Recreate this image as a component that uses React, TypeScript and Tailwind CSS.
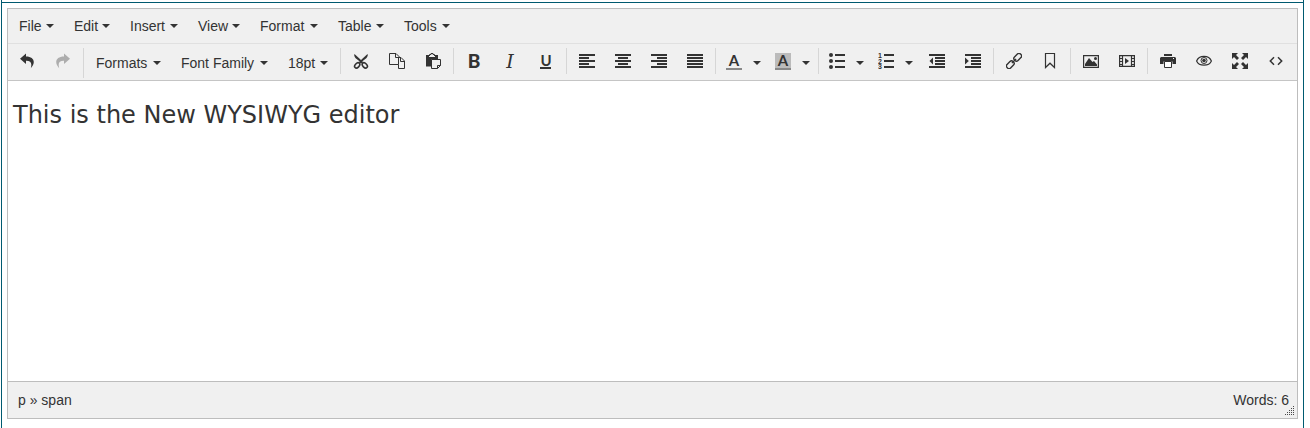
import React, { useState } from 'react';

const menus = [
  { label: 'File', width: 'w-[55px]' },
  { label: 'Edit', width: 'w-[56px]' },
  { label: 'Insert', width: 'w-[68px]' },
  { label: 'View', width: 'w-[62px]' },
  { label: 'Format', width: 'w-[78px]' },
  { label: 'Table', width: 'w-[66px]' },
  { label: 'Tools', width: 'w-[66px]' },
];

const Caret: React.FC = () => (
  <svg viewBox="0 0 8 4" className="w-2 h-1 shrink-0" fill="currentColor" aria-hidden="true">
    <path d="M0 0h8L4 4z" />
  </svg>
);

const Icon: React.FC<{ children: React.ReactNode }> = ({ children }) => (
  <svg
    viewBox="0 0 16 16"
    className="w-4 h-4 shrink-0"
    fill="none"
    stroke="currentColor"
    strokeWidth="0"
    aria-hidden="true"
  >
    {children}
  </svg>
);

// Horizontal bars of the align and indent icons, as [x, width] from top to bottom
const Bars: React.FC<{ rows: number[][]; step?: number }> = ({ rows, step = 3 }) => (
  <g fill="currentColor">
    {rows.map(([x, width], i) => (
      <rect key={i} x={x} y={1 + i * step} width={width} height="2" />
    ))}
  </g>
);

const icons = {
  undo: (
    <Icon>
      <path fill="currentColor" d="M7 3.5V.4L1 5.8l6 5.2V7.8c4.600-.1 6.300 1.700 4.800 7.400C17.200 9.500 15 3.500 7 3.500z" />
    </Icon>
  ),
  redo: (
    <Icon>
      <path fill="currentColor" d="M9 3.500V.4l6 5.400L9 11V7.800C4.400 7.700 2.700 9.500 4.200 15.200-1.200 9.500 1 3.500 9 3.500z" />
    </Icon>
  ),
  cut: (
    <Icon>
      <path fill="currentColor" d="M1.500 1C.6 3 2 5.200 6.500 8.200L6 10.200h4l-.5-2C14 5.200 15.400 3 14.500 1L8 7z" />
      <g strokeWidth="1.600">
        <ellipse cx="4.200" cy="12.400" rx="3" ry="2" transform="rotate(-45 4.200 12.400)" />
        <ellipse cx="11.800" cy="12.400" rx="3" ry="2" transform="rotate(45 11.800 12.400)" />
      </g>
    </Icon>
  ),
  copy: (
    <Icon>
      <g strokeWidth="1">
        <path d="M9.500 11.500h-9V.5h6.500l3.500 3.500v1M6.500.5v4h4" />
        <path d="M9.500 11.500v4h6V8L12 4.500H9.500v7M11.500 4.500v4h4" />
      </g>
    </Icon>
  ),
  paste: (
    <Icon>
      <path fill="currentColor" d="M1 2h3v2h6V2h3v4H6.500v7.500H1z" />
      <path strokeWidth="1" d="M4.500 3V1.500h1.500V.5h2v1h1.500V3" />
      <path strokeWidth="1" d="M6.500 6.500h9v6l-3 3h-6zM12.500 15.500v-3h3" />
    </Icon>
  ),
  alignLeft: <Icon><Bars rows={[[0, 16], [0, 10], [0, 16], [0, 10], [0, 16]]} /></Icon>,
  alignCenter: <Icon><Bars rows={[[0, 16], [3, 10], [0, 16], [3, 10], [0, 16]]} /></Icon>,
  alignRight: <Icon><Bars rows={[[0, 16], [6, 10], [0, 16], [6, 10], [0, 16]]} /></Icon>,
  justify: <Icon><Bars rows={[[0, 16], [0, 16], [0, 16], [0, 16], [0, 16]]} /></Icon>,
  bullets: (
    <Icon>
      <Bars rows={[[6, 10], [6, 10], [6, 10]]} step={6} />
      <g fill="currentColor">
        <circle cx="2" cy="2" r="2" />
        <circle cx="2" cy="8" r="2" />
        <circle cx="2" cy="14" r="2" />
      </g>
    </Icon>
  ),
  numbers: (
    <Icon>
      <Bars rows={[[6, 10], [6, 10], [6, 10]]} step={6} />
      <g fill="currentColor" fontFamily="Liberation Sans, sans-serif" fontSize="7" fontWeight="700">
        <text x="0" y="5">1</text>
        <text x="0" y="10.500">2</text>
        <text x="0" y="16">3</text>
      </g>
    </Icon>
  ),
  outdent: (
    <Icon>
      <Bars rows={[[0, 16], [6, 10], [6, 10], [6, 10], [0, 16]]} />
      <path fill="currentColor" d="M4 4.500v7L.5 8z" />
    </Icon>
  ),
  indent: (
    <Icon>
      <Bars rows={[[0, 16], [6, 10], [6, 10], [6, 10], [0, 16]]} />
      <path fill="currentColor" d="M0 4.500v7L3.800 8z" />
    </Icon>
  ),
  link: (
    <Icon>
      <g strokeWidth="1.400" transform="rotate(-45 8 8)">
        <rect x="-1.500" y="5.500" width="8.500" height="5" rx="2.200" />
        <rect x="9" y="5.500" width="8.500" height="5" rx="2.200" />
        <path d="M5 8h6" />
      </g>
    </Icon>
  ),
  bookmark: (
    <Icon>
      <path strokeWidth="1.200" d="M3.500.5h9v14L8 10.200l-4.500 4.300z" />
    </Icon>
  ),
  image: (
    <Icon>
      <path strokeWidth="1.200" d="M.6 2.600h14.800v11.800H.6z" />
      <path fill="currentColor" d="M2 13v-2l4-6 3.500 4L11 8l3 3.500V13z" />
      <circle cx="12.500" cy="5.500" r="1.500" fill="currentColor" />
    </Icon>
  ),
  media: (
    <Icon>
      <path strokeWidth="1.200" d="M.6 2.600h14.800v10.800H.6zM3.500 2.500v11M12.500 2.500v11M.5 5.500h3M.5 8.500h3M.5 11.500h3M12.500 5.500h3M12.500 8.500h3M12.500 11.500h3" />
      <path fill="currentColor" d="M6 5v6l4-3z" />
    </Icon>
  ),
  print: (
    <Icon>
      <path fill="currentColor" d="M4 1h8v2H4zM1 4h14l1 1v6h-3.500V8.500h-9V11H0V5z" />
      <path strokeWidth="1" d="M4.500 8.500h7v6h-7z" fill="#fff" />
      <path fill="#f0f0f0" d="M13 5h1v1h-1z" />
    </Icon>
  ),
  preview: (
    <Icon>
      <path strokeWidth="1.200" d="M.6 8C3 1.800 13 1.800 15.400 8 13 13.600 3 13.600.6 8z" />
      <circle cx="8" cy="7.500" r="3" strokeWidth="1" />
      <circle cx="8" cy="7.500" r="1.800" fill="currentColor" />
    </Icon>
  ),
  fullscreen: (
    <Icon>
      <path fill="currentColor" d="M0 0h6L4 2l3 3-2 2-3-3-2 2zM16 0v6l-2-2-3 3-2-2 3-3-2-2zM0 16v-6l2 2 3-3 2 2-3 3 2 2zM16 16h-6l2-2-3-3 2-2 3 3 2-2z" />
    </Icon>
  ),
  code: (
    <Icon>
      <path strokeWidth="1.500" d="M6 4.300L2.300 8 6 11.700M10 4.300L13.700 8 10 11.700" />
    </Icon>
  ),
  bold: <span className="font-['Lato',sans-serif] text-[19px] leading-4 font-black">B</span>,
  italic: <span className="font-['DejaVu_Serif',serif] text-[19px] leading-4 italic">I</span>,
  underline: (
    <span className="flex flex-col items-center gap-px font-['Lato',sans-serif] text-[15px] leading-3 font-bold">
      U
      <span className="w-[11px] h-[2px] bg-[#333]" />
    </span>
  ),
  textColor: (
    <span className="w-4 h-[17px] text-center border-b-2 border-[#888] font-['Lato',sans-serif] text-[15px] leading-[14px] font-bold">A</span>
  ),
  backColor: (
    <span className="w-4 h-[17px] text-center bg-[#bbb] border-b-2 border-[#888] font-['Lato',sans-serif] text-[15px] leading-[14px] font-bold">A</span>
  ),
};

interface ToolButtonProps {
  icon: keyof typeof icons;
  label: string;
  split?: boolean;
  disabled?: boolean;
}

const ToolButton: React.FC<ToolButtonProps> = ({ icon, label, split, disabled }) => (
  <div className="flex h-[26px]">
    <button
      type="button"
      aria-label={label}
      disabled={disabled}
      className={`flex items-center justify-center hover:bg-gray-200 disabled:opacity-35 ${split ? 'w-8' : 'w-9'}`}
    >
      {icons[icon]}
    </button>
    {split && (
      <button type="button" aria-label={`${label} options`} className="flex items-center w-[17px] pl-[3px] pt-1 hover:bg-gray-200">
        <Caret />
      </button>
    )}
  </div>
);

const ListButton: React.FC<{ label: string; className?: string }> = ({ label, className = '' }) => (
  <button
    type="button"
    aria-haspopup="true"
    className={`flex items-center justify-between px-[10px] whitespace-nowrap hover:bg-gray-200 ${className}`}
  >
    {label}
    <Caret />
  </button>
);

const Group: React.FC<{ children: React.ReactNode }> = ({ children }) => (
  <div className="flex pr-0.5 mr-0.5 border-r border-[#d6d6d6] last:border-r-0 last:mr-0 last:pr-0">{children}</div>
);

const ResizeHandle: React.FC = () => (
  <svg viewBox="0 0 10 10" className="absolute right-[3px] bottom-[3px] w-[10px] h-[10px] cursor-se-resize" fill="#4a4a4a" shapeRendering="crispEdges" aria-hidden="true">
    {[0, 1, 2, 3, 4].map((row) =>
      [0, 1, 2, 3, 4]
        .filter((col) => col + row >= 4)
        .map((col) => <rect key={`${row}-${col}`} x={col * 2 + 1} y={row * 2 + 1} width="1" height="1" />)
    )}
  </svg>
);

export default function App() {
  const [content, setContent] = useState('This is the New WYSIWYG editor');
  const words = content.split(/\s+/).filter(Boolean).length;

  return (
    <div className="min-h-screen bg-white pl-px pr-1.5 font-['Liberation_Sans',Arial,sans-serif] text-sm text-[#333]">
      <div className="min-h-screen border-x border-[#005a70] pt-0.5">
        <div className="border-t border-[#005a70] px-[5px] pt-[5px]">
          <div className="border border-[#bdbdbd]">
            <nav className="flex flex-wrap bg-[#f0f0f0] border-b border-[#e0e0e0] px-px">
              {menus.map((menu) => (
                <ListButton key={menu.label} label={menu.label} className={`h-[34px] ${menu.width}`} />
              ))}
            </nav>

            <div role="toolbar" aria-label="Formatting" className="flex flex-wrap items-start bg-[#f0f0f0] border-b border-[#c5c5c5] px-px pt-1 pb-0.5">
              <Group>
                <div className="flex h-[30px]">
                  <ToolButton icon="undo" label="Undo" />
                  <ToolButton icon="redo" label="Redo" disabled />
                </div>
              </Group>
              <div className="flex">
                <ListButton label="Formats" className="h-[30px] w-[85px]" />
                <ListButton label="Font Family" className="h-[30px] w-[107px]" />
                <ListButton label="18pt" className="h-[30px] w-[60px]" />
              </div>
              <div className="w-px h-[26px] mx-0.5 bg-[#d6d6d6]" />
              <Group>
                <ToolButton icon="cut" label="Cut" />
                <ToolButton icon="copy" label="Copy" />
                <ToolButton icon="paste" label="Paste" />
              </Group>
              <Group>
                <ToolButton icon="bold" label="Bold" />
                <ToolButton icon="italic" label="Italic" />
                <ToolButton icon="underline" label="Underline" />
              </Group>
              <Group>
                <ToolButton icon="alignLeft" label="Align left" />
                <ToolButton icon="alignCenter" label="Align center" />
                <ToolButton icon="alignRight" label="Align right" />
                <ToolButton icon="justify" label="Justify" />
              </Group>
              <Group>
                <ToolButton icon="textColor" label="Text color" split />
                <ToolButton icon="backColor" label="Background color" split />
              </Group>
              <Group>
                <ToolButton icon="bullets" label="Bullet list" split />
                <ToolButton icon="numbers" label="Numbered list" split />
                <ToolButton icon="outdent" label="Decrease indent" />
                <ToolButton icon="indent" label="Increase indent" />
              </Group>
              <Group>
                <ToolButton icon="link" label="Insert link" />
                <ToolButton icon="bookmark" label="Anchor" />
              </Group>
              <Group>
                <ToolButton icon="image" label="Insert image" />
                <ToolButton icon="media" label="Insert video" />
              </Group>
              <Group>
                <ToolButton icon="print" label="Print" />
                <ToolButton icon="preview" label="Preview" />
                <ToolButton icon="fullscreen" label="Fullscreen" />
                <ToolButton icon="code" label="Source code" />
              </Group>
            </div>

            <textarea
              aria-label="Editor content"
              value={content}
              onChange={(e) => setContent(e.target.value)}
              spellCheck={false}
              className="block w-full h-[300px] resize-none outline-none bg-white px-[5px] pt-5 font-['Verdana','DejaVu_Sans',sans-serif] text-2xl leading-7"
            />

            <footer className="relative flex items-center justify-between h-[37px] bg-[#f0f0f0] border-t border-[#bdbdbd] pl-[10px] pr-2">
              <span>p » span</span>
              <span>Words: {words}</span>
              <ResizeHandle />
            </footer>
          </div>
        </div>
      </div>
    </div>
  );
}
